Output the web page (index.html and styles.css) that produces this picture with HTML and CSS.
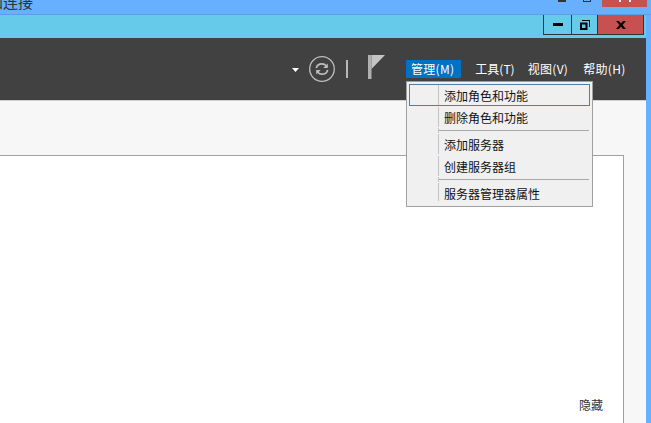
FILE: index.html
```html
<!DOCTYPE html>
<html lang="zh">
<head>
<meta charset="utf-8">
<title>服务器管理器</title>
<link rel="stylesheet" href="styles.css">
</head>
<body>
<div class="desk">
  <div class="outer-title">
    <span class="outer-text">加连接</span>
    <div class="outer-controls">
      <span class="outer-glyph"></span>
      <span class="outer-glyph boxed"></span>
      <span class="outer-close"></span>
    </div>
  </div>
  <div class="window">
    <div class="titlebar">
      <div class="controls">
        <div class="ctl min"><svg width="10" height="3" viewBox="0 0 10 3"><rect width="10" height="3" fill="#000"/></svg></div>
        <div class="ctl max"><svg width="10" height="10" viewBox="0 0 10 10"><path d="M2 0h8v7H9V1H2zM0 2.500h7.500V10H0zM2 4.500V8h3.500V4.500z" fill="#000" fill-rule="evenodd"/></svg></div>
        <div class="ctl close"><svg width="10" height="8" viewBox="0 0 10 8"><path d="M0 0h3l2 2.500L7 0h3L6.500 4 10 8H7L5 5.500 3 8H0l3.500-4z" fill="#000"/></svg></div>
      </div>
    </div>
    <div class="toolbar">
      <svg class="caret" width="7" height="4" viewBox="0 0 7 4"><path d="M0 0h7L3.500 4z" fill="#fff"/></svg>
      <svg class="refresh" width="28" height="28" viewBox="0 0 28 28">
        <circle cx="14" cy="14" r="12.300" fill="none" stroke="#bdbdbd" stroke-width="1.300"/>
        <path d="M8.300 13.200c.5-2.700 2.900-4.400 5.700-4.400 1.700 0 3.200.7 4.200 1.900" fill="none" stroke="#bdbdbd" stroke-width="1.700"/>
        <path d="M19.800 8.400v4.600h-4.600z" fill="#bdbdbd"/>
        <path d="M19.700 14.800c-.5 2.700-2.900 4.400-5.700 4.400-1.700 0-3.200-.7-4.200-1.900" fill="none" stroke="#bdbdbd" stroke-width="1.700"/>
        <path d="M8.200 19.600V15h4.600z" fill="#bdbdbd"/>
      </svg>
      <span class="sep"></span>
      <svg class="flag" width="17" height="24" viewBox="0 0 17 24">
        <rect x="0" y="0" width="3.500" height="24" fill="#b0b0b0"/>
        <path d="M3.500 0H17L3.500 14z" fill="#c4c4c4"/>
      </svg>
      <nav class="menubar">
        <span class="menu active">管理(M)</span>
        <span class="menu narrow">工具(T)</span>
        <span class="menu wide">视图(V)</span>
        <span class="menu wide">帮助(H)</span>
      </nav>
    </div>
    <div class="content">
      <div class="panel">
        <span class="hide">隐藏</span>
      </div>
    </div>
  </div>
  <div class="dropdown">
    <div class="item hot"><span class="gutter"></span><span class="label">添加角色和功能</span></div>
    <div class="item"><span class="gutter"></span><span class="label">删除角色和功能</span></div>
    <div class="rule"><span class="gutter"></span><span class="line"></span></div>
    <div class="item"><span class="gutter"></span><span class="label">添加服务器</span></div>
    <div class="item"><span class="gutter"></span><span class="label">创建服务器组</span></div>
    <div class="rule"><span class="gutter"></span><span class="line"></span></div>
    <div class="item last"><span class="gutter"></span><span class="label">服务器管理器属性</span></div>
  </div>
</div>
</body>
</html>
```
FILE: styles.css
```css
* { box-sizing: border-box; }
html, body { margin: 0; padding: 0; }
body {
  width: 651px;
  height: 423px;
  overflow: hidden;
  font-family: "Noto Sans CJK SC", "Liberation Sans", sans-serif;
  font-size: 12px;
  background: #66b0ff;
}
.desk { position: relative; width: 651px; height: 423px; overflow: hidden; }
.outer-title {
  height: 15px;
  display: flex;
  justify-content: space-between;
  background: #66b0ff;
  border-bottom: 1px solid #5a9ee6;
  overflow: hidden;
}
.outer-text {
  margin: -7px 0 0 -12px;
  font-size: 15px;
  line-height: 18px;
  height: 18px;
  color: #333;
  white-space: nowrap;
}
.outer-controls { display: flex; align-items: flex-start; margin-right: 4px; }
.outer-glyph { width: 8px; height: 2px; background: #333; margin-right: 17px; }
.outer-glyph.boxed { height: 2px; background: none; border: 1px solid #333; border-top: 0; margin-right: 11px; }
.outer-close {
  width: 45px;
  height: 7px;
  background: #c75050;
  display: flex;
  justify-content: center;
}
.outer-close::before {
  content: "";
  width: 8px;
  height: 2px;
  border-left: 2px solid #fff;
  border-right: 2px solid #fff;
}
.window { width: 646px; height: 408px; display: flex; flex-direction: column; }
.titlebar {
  height: 23px;
  background: #66cbea;
  display: flex;
  justify-content: flex-end;
}
.controls { display: flex; height: 20px; }
.ctl {
  height: 20px;
  display: flex;
  align-items: center;
  justify-content: center;
  border-bottom: 1px solid #333;
  border-right: 1px solid #333;
}
.min { width: 29px; border-left: 1px solid #333; }
.max { width: 26px; }
.close { width: 46px; background: #c75050; margin-right: 2px; }
.toolbar {
  height: 62px;
  background: #414141;
  display: flex;
  align-items: center;
}
.caret { margin-left: 292px; margin-top: 1px; }
.refresh { margin-left: 9px; }
.sep { width: 2px; height: 18px; background: #b8b8b8; margin-left: 10px; }
.flag { margin-left: 20px; margin-top: -4px; }
.menubar { display: flex; margin-left: 21px; }
.menu {
  color: #fff;
  font-size: 12px;
  line-height: 17px;
  height: 18px;
  padding: 0 5px;
  margin-right: 5px;
  white-space: nowrap;
}
.menu.active { background: #0072c6; letter-spacing: 0.3px; padding-right: 7px; margin-right: 9px; }
.menu.narrow { margin-right: 3px; }
.menu.wide { letter-spacing: 0.3px; }
.content {
  flex: 1;
  background: #f7f7f7;
  border-top: 1px solid #d0d0d0;
  padding-top: 54px;
  padding-right: 22px;
}
.panel {
  height: 100%;
  background: #fff;
  border: 1px solid #a0a0a0;
  border-left: 0;
  border-bottom: 0;
  display: flex;
  align-items: flex-end;
  justify-content: flex-end;
  padding: 0 20px 10px 0;
}
.hide { color: #333; font-size: 12px; line-height: 17px; }
.dropdown {
  position: absolute;
  left: 406px;
  top: 81px;
  width: 187px;
  height: 126px;
  background: #f0f0f0;
  border: 1px solid #a0a0a0;
  padding: 2px;
}
.item {
  height: 22px;
  display: flex;
  align-items: center;
  border: 1px solid transparent;
}
.item.hot { border-color: #4a7fae; }
.gutter { width: 29px; height: 100%; border-right: 1px solid #c4c4c4; flex: none; }
.item.last .gutter { height: 18px; align-self: flex-start; }
.label { color: #111; padding-left: 5px; font-size: 12px; white-space: nowrap; }
.rule { height: 5px; display: flex; align-items: center; padding: 0 1px; }
.rule .gutter { height: 5px; }
.line { flex: 1; height: 1px; background: #a8a8a8; }
```
